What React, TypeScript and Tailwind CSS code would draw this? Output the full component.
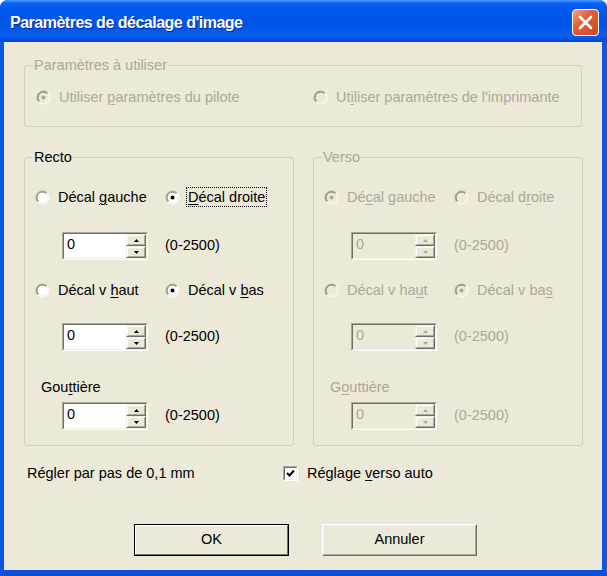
import type { ReactNode } from 'react';

const FACE = '#ece9d8';

function Key({ t, i }: { t: string; i: number }) {
    return (
        <>
            {t.slice(0, i)}
            <span className="underline decoration-1 underline-offset-[2px]">{t[i]}</span>
            {t.slice(i + 1)}
        </>
    );
}

function Radio({ checked = false, disabled = false }: { checked?: boolean; disabled?: boolean }) {
    return (
        <svg width="15" height="15" viewBox="0 0 15 15" className="shrink-0">
            <circle cx="7.5" cy="7.5" r="6" fill={disabled ? FACE : '#ffffff'} />
            <path d="M2.9 12.1 A6.5 6.5 0 0 1 12.1 2.9" fill="none" stroke="#aca899" />
            <path d="M12.1 2.9 A6.5 6.5 0 0 1 2.9 12.1" fill="none" stroke="#ffffff" />
            <path d="M3.61 11.39 A5.5 5.5 0 0 1 11.39 3.61" fill="none" stroke="#716f64" />
            <path d="M11.39 3.61 A5.5 5.5 0 0 1 3.61 11.39" fill="none" stroke="#f1efe2" />
            {checked && <circle cx="7.5" cy="7.5" r="2" fill={disabled ? '#aca899' : '#000000'} />}
        </svg>
    );
}

function Option({
    label,
    checked,
    disabled,
    focus,
    className = '',
}: {
    label: ReactNode;
    checked?: boolean;
    disabled?: boolean;
    focus?: boolean;
    className?: string;
}) {
    return (
        <div className={`flex h-[16px] items-center gap-[8px] ${className}`}>
            <Radio checked={checked} disabled={disabled} />
            <span
                className={`whitespace-nowrap leading-[16px] ${disabled ? 'text-[#aca899]' : 'text-black'} ${
                    focus ? 'outline-1 outline-offset-[1px] outline-black outline-dotted' : ''
                }`}
            >
                {label}
            </span>
        </div>
    );
}

function SpinButton({ up, disabled }: { up?: boolean; disabled?: boolean }) {
    return (
        <div className="flex h-[12px] border border-t-[#f1efe2] border-l-[#f1efe2] border-b-[#716f64] border-r-[#716f64]">
            <div className="flex flex-1 items-center justify-center border border-t-white border-l-white border-b-[#aca899] border-r-[#aca899] bg-[#ece9d8]">
                <svg width="5" height="3" viewBox="0 0 5 3">
                    <path
                        d={up ? 'M2.5 0 L5 3 L0 3 Z' : 'M0 0 L5 0 L2.5 3 Z'}
                        fill={disabled ? '#aca899' : '#000000'}
                    />
                </svg>
            </div>
        </div>
    );
}

function SpinRow({ disabled, className = '' }: { disabled?: boolean; className?: string }) {
    return (
        <div className={`flex h-[28px] items-center ${className}`}>
            <div className="ml-[37px] flex h-[28px] w-[86px] border border-t-[#aca899] border-l-[#aca899] border-b-white border-r-white">
                <div className="flex flex-1 border border-t-[#716f64] border-l-[#716f64] border-b-[#f1efe2] border-r-[#f1efe2]">
                    <div
                        className={`flex-1 pl-[3px] pt-[2px] leading-[16px] ${
                            disabled ? 'bg-[#ece9d8] text-[#aca899]' : 'bg-white text-black'
                        }`}
                    >
                        0
                    </div>
                    <div className="flex w-[20px] flex-col">
                        <SpinButton up disabled={disabled} />
                        <SpinButton disabled={disabled} />
                    </div>
                </div>
            </div>
            <span className={`ml-[17px] ${disabled ? 'text-[#aca899]' : 'text-black'}`}>(0-2500)</span>
        </div>
    );
}

function Group({
    title,
    disabled,
    className = '',
    children,
}: {
    title: string;
    disabled?: boolean;
    className?: string;
    children: ReactNode;
}) {
    return (
        <fieldset className={`rounded-[3px] border border-[#d0d0bf] ${className}`}>
            <legend className={`ml-[8px] px-[1px] leading-[16px] ${disabled ? 'text-[#aca899]' : 'text-black'}`}>
                {title}
            </legend>
            {children}
        </fieldset>
    );
}

type SideKeys = { left: number; right: number; up: number; down: number; gutter: number };

function Side({
    title,
    disabled,
    keys,
    checkLeft,
}: {
    title: string;
    disabled?: boolean;
    keys: SideKeys;
    checkLeft?: boolean;
}) {
    return (
        <Group title={title} disabled={disabled} className="w-[270px] pb-[15px]">
            <div className="flex pl-[10px] pt-[24px]">
                <Option
                    className="w-[130px]"
                    label={<Key t="Décal gauche" i={keys.left} />}
                    checked={checkLeft}
                    disabled={disabled}
                />
                <Option
                    label={<Key t="Décal droite" i={keys.right} />}
                    checked={!checkLeft}
                    disabled={disabled}
                    focus={!disabled}
                />
            </div>
            <SpinRow className="mt-[27px]" disabled={disabled} />
            <div className="mt-[22px] flex pl-[10px]">
                <Option className="w-[130px]" label={<Key t="Décal v haut" i={keys.up} />} disabled={disabled} />
                <Option label={<Key t="Décal v bas" i={keys.down} />} checked disabled={disabled} />
            </div>
            <SpinRow className="mt-[25px]" disabled={disabled} />
            <div className={`ml-[16px] mt-[28px] h-[16px] leading-[16px] ${disabled ? 'text-[#aca899]' : 'text-black'}`}>
                <Key t="Gouttière" i={keys.gutter} />
            </div>
            <SpinRow className="mt-[7px]" disabled={disabled} />
        </Group>
    );
}

function PushButton({ label, isDefault }: { label: string; isDefault?: boolean }) {
    return (
        <div className={`h-[32px] w-[155px] border ${isDefault ? 'border-black' : 'border-t-white border-l-white border-b-[#716f64] border-r-[#716f64]'}`}>
            <div
                className={`flex h-full items-center justify-center border bg-[#ece9d8] ${
                    isDefault
                        ? 'border-t-white border-l-white border-b-[#716f64] border-r-[#716f64]'
                        : 'border-t-[#f1efe2] border-l-[#f1efe2] border-b-[#aca899] border-r-[#aca899]'
                }`}
            >
                {label}
            </div>
        </div>
    );
}

export default function App() {
    return (
        <div className="flex h-[576px] w-[607px] flex-col overflow-hidden rounded-t-[8px] bg-[#0a56e6] font-['Liberation_Sans',Arial,sans-serif] text-[14.5px] text-black">
            <div className="flex h-[42px] shrink-0 items-center justify-between bg-[linear-gradient(to_bottom,#4a9bff_0%,#0f63f2_7%,#0058ee_20%,#0055e9_60%,#0a5ff0_85%,#0048d8_100%)] pl-[10px] pr-[8px] pt-[3px]">
                <span className="text-[16px] font-bold tracking-[-0.5px] text-white [text-shadow:1px_1px_0_#0a2a8c]">
                    Paramètres de décalage d'image
                </span>
                <div className="flex h-[27px] w-[27px] items-center justify-center rounded-[4px] border border-white bg-[linear-gradient(135deg,#f0a089_0%,#e2603d_40%,#cf4524_100%)]">
                    <svg width="15" height="15" viewBox="0 0 15 15">
                        <path d="M2 2 L13 13 M13 2 L2 13" stroke="#ffffff" strokeWidth="2.6" strokeLinecap="round" />
                    </svg>
                </div>
            </div>
            <div className="flex flex-1 flex-col border-b-[6px] border-l-[4px] border-r-[5px] border-b-[#0a4fd9] border-l-[#0a56e6] border-r-[#0a56e6] bg-[#ece9d8]">
                <Group title="Paramètres à utiliser" disabled className="ml-[20px] mt-[15px] w-[558px] pb-[21px]">
                    <div className="flex pl-[11px] pt-[16px]">
                        <Option
                            className="w-[277px]"
                            label={<Key t="Utiliser paramètres du pilote" i={9} />}
                            checked
                            disabled
                        />
                        <Option label={<Key t="Utiliser paramètres de l'imprimante" i={2} />} disabled />
                    </div>
                </Group>
                <div className="ml-[20px] mt-[22px] flex gap-[19px]">
                    <Side title="Recto" keys={{ left: 6, right: 0, up: 8, down: 8, gutter: 3 }} />
                    <Side title="Verso" disabled checkLeft keys={{ left: 2, right: 7, up: 10, down: 10, gutter: 1 }} />
                </div>
                <div className="ml-[23px] mt-[19px] flex h-[16px] items-center">
                    <span className="w-[256px] leading-[16px]">Régler par pas de 0,1 mm</span>
                    <div className="flex h-[15px] w-[15px] border border-t-[#aca899] border-l-[#aca899] border-b-white border-r-white">
                        <div className="flex flex-1 items-center justify-center border border-t-[#716f64] border-l-[#716f64] border-b-[#f1efe2] border-r-[#f1efe2] bg-white">
                            <svg width="9" height="9" viewBox="0 0 9 9">
                                <path d="M1 4 L3.5 6.5 L8 1.5" fill="none" stroke="#000000" strokeWidth="2" />
                            </svg>
                        </div>
                    </div>
                    <span className="ml-[9px] leading-[16px]">
                        <Key t="Réglage verso auto" i={8} />
                    </span>
                </div>
                <div className="ml-[130px] mt-[43px] flex gap-[33px]">
                    <PushButton label="OK" isDefault />
                    <PushButton label="Annuler" />
                </div>
            </div>
        </div>
    );
}
